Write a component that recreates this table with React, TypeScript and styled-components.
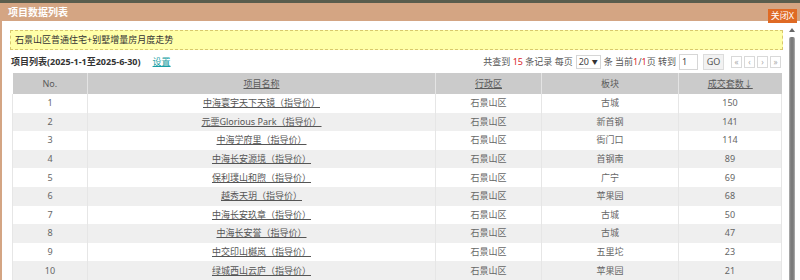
import styled, { createGlobalStyle } from "styled-components";

const GlobalStyle = createGlobalStyle`
  html, body {
    margin: 0;
    padding: 0;
    background: #5a5d4d;
    overflow: hidden;
  }
  body {
    font-family: "Noto Sans", "Noto Sans CJK SC", sans-serif;
  }
`;

const Page = styled.div`
  width: 800px;
  height: 280px;
  padding-top: 3px;
  box-sizing: border-box;
  overflow: hidden;
`;

const Dialog = styled.div`
  background: #d4a583;
  padding: 0 0 0 2px;
  height: 277px;
  display: flex;
  flex-direction: column;
`;

const TitleBar = styled.div`
  height: 18px;
  display: flex;
  justify-content: space-between;
  padding-left: 6px;
  padding-right: 3px;
  color: #fff;
  font-size: 10px;
  font-weight: 700;
  line-height: 18px;
  flex-shrink: 0;
`;

const CloseButton = styled.div`
  align-self: flex-end;
  margin-bottom: -2px;
  background: #df6a24;
  color: #fff;
  font-weight: 400;
  font-size: 9px;
  line-height: 14px;
  height: 14px;
  padding: 0 3px;
  position: relative;
  z-index: 1;
`;

const Body = styled.div`
  flex: 1;
  background: #fff;
  display: flex;
  min-height: 0;
`;

const Content = styled.div`
  flex: 1;
  padding: 9px 3px 0 8px;
  min-width: 0;
`;

const Notice = styled.div`
  height: 20px;
  box-sizing: border-box;
  background: #ffffa9;
  border: 1px dashed #d8c86c;
  font-size: 9px;
  color: #333;
  line-height: 18px;
  padding-left: 4px;
`;

const Toolbar = styled.div`
  height: 23px;
  display: flex;
  align-items: center;
  justify-content: space-between;
  padding-left: 1px;
  padding-right: 2px;
  font-size: 9px;
  color: #333;
`;

const ListTitle = styled.div`
  display: flex;
  align-items: center;
  gap: 12px;
  font-weight: 700;
`;

const SettingLink = styled.a`
  font-weight: 400;
  color: #1a9fa5;
  text-decoration: underline;
`;

const Pager = styled.div`
  display: flex;
  align-items: center;
  gap: 3px;
  color: #555;
`;

const Red = styled.span`
  color: #d9262a;
`;

const SelectBox = styled.div`
  width: 25px;
  height: 14px;
  border: 1px solid #d6d6d6;
  display: flex;
  align-items: center;
  justify-content: space-between;
  padding: 0 2px;
  box-sizing: border-box;
  font-size: 9px;
  color: #444;
`;

const Caret = styled.span`
  font-size: 6px;
  color: #333;
`;

const InputBox = styled.div`
  width: 19px;
  height: 16px;
  border: 1px solid #d6d6d6;
  box-sizing: border-box;
  padding-left: 2px;
  line-height: 14px;
  color: #444;
`;

const GoButton = styled.div`
  width: 21px;
  height: 16px;
  margin-left: 2px;
  box-sizing: border-box;
  background: #f2f2f2;
  border: 1px solid #dcdcdc;
  text-align: center;
  line-height: 14px;
  color: #555;
`;

const NavGroup = styled.div`
  display: flex;
  gap: 2px;
  margin-left: 4px;
`;

const NavButton = styled.div`
  width: 11px;
  height: 12px;
  box-sizing: border-box;
  border: 1px solid #d9d9d9;
  font-size: 8px;
  line-height: 10px;
  text-align: center;
  color: #aaa;
`;

const Table = styled.table`
  margin-left: 2px;
  width: 769px;
  border-collapse: collapse;
  table-layout: fixed;
  font-size: 9px;
  color: #666;
`;

const HeadCell = styled.th<{ $sortable?: boolean }>`
  height: 21px;
  padding: 0;
  background: #cbcbcb;
  font-weight: 400;
  color: #5a5a5a;
  border-left: 1px solid #e4e4e4;
  text-decoration: ${(p) => (p.$sortable ? "underline" : "none")};
  &:first-child {
    border-left: none;
  }
`;

const Row = styled.tr<{ $striped: boolean }>`
  height: 18.6px;
  background: ${(p) => (p.$striped ? "#efefef" : "#fff")};
`;

const Cell = styled.td`
  padding: 0;
  text-align: center;
  border-left: 1px solid #e6e6e6;
  border-right: 1px solid #e6e6e6;
  line-height: 18px;
`;

const NameLink = styled.span`
  color: #555;
  text-decoration: underline;
`;

const ScrollBar = styled.div`
  width: 11px;
  margin-right: 3px;
  display: flex;
  flex-direction: column;
  align-items: center;
  padding-top: 7px;
`;

const ArrowUp = styled.div`
  width: 0;
  height: 0;
  border-left: 3px solid transparent;
  border-right: 3px solid transparent;
  border-bottom: 4px solid #666;
`;

const Thumb = styled.div`
  margin-top: 5px;
  flex: 1;
  width: 6px;
  border-radius: 2px 2px 0 0;
  background: linear-gradient(to right, #b4b4b4, #7c7c7c 30%, #7c7c7c 70%, #b4b4b4);
`;

const rows: [string, string, number][] = [
  ["中海寰宇天下天镜（指导价）", "古城", 150],
  ["元垔Glorious Park（指导价）", "新首钢", 141],
  ["中海学府里（指导价）", "衙门口", 114],
  ["中海长安源境（指导价）", "首钢南", 89],
  ["保利璞山和煦（指导价）", "广宁", 69],
  ["越秀天玥（指导价）", "苹果园", 68],
  ["中海长安玖章（指导价）", "古城", 50],
  ["中海长安誉（指导价）", "古城", 47],
  ["中交印山樾岚（指导价）", "五里坨", 23],
  ["绿城西山云庐（指导价）", "苹果园", 21],
];

export default function App() {
  return (
    <Page>
      <GlobalStyle />
      <Dialog>
        <TitleBar>
          <span>项目数据列表</span>
          <CloseButton>关闭X</CloseButton>
        </TitleBar>
        <Body>
          <Content>
            <Notice>石景山区普通住宅+别墅增量房月度走势</Notice>
            <Toolbar>
              <ListTitle>
                项目列表(2025-1-1至2025-6-30)
                <SettingLink>设置</SettingLink>
              </ListTitle>
              <Pager>
                <span>
                  共查到 <Red>15</Red> 条记录 每页
                </span>
                <SelectBox>
                  20 <Caret>▼</Caret>
                </SelectBox>
                <span>
                  条 当前<Red>1</Red>/<Red>1</Red>页 转到
                </span>
                <InputBox>1</InputBox>
                <GoButton>GO</GoButton>
                <NavGroup>
                  <NavButton>«</NavButton>
                  <NavButton>‹</NavButton>
                  <NavButton>›</NavButton>
                  <NavButton>»</NavButton>
                </NavGroup>
              </Pager>
            </Toolbar>
            <Table>
              <colgroup>
                <col style={{ width: 75 }} />
                <col style={{ width: 348 }} />
                <col style={{ width: 106 }} />
                <col style={{ width: 137 }} />
                <col style={{ width: 103 }} />
              </colgroup>
              <thead>
                <tr>
                  <HeadCell>No.</HeadCell>
                  <HeadCell $sortable>项目名称</HeadCell>
                  <HeadCell $sortable>行政区</HeadCell>
                  <HeadCell>板块</HeadCell>
                  <HeadCell $sortable>成交套数↓</HeadCell>
                </tr>
              </thead>
              <tbody>
                {rows.map(([name, area, count], i) => (
                  <Row key={i} $striped={i % 2 === 1}>
                    <Cell>{i + 1}</Cell>
                    <Cell>
                      <NameLink>{name}</NameLink>
                    </Cell>
                    <Cell>石景山区</Cell>
                    <Cell>{area}</Cell>
                    <Cell>{count}</Cell>
                  </Row>
                ))}
              </tbody>
            </Table>
          </Content>
          <ScrollBar>
            <ArrowUp />
            <Thumb />
          </ScrollBar>
        </Body>
      </Dialog>
    </Page>
  );
}
